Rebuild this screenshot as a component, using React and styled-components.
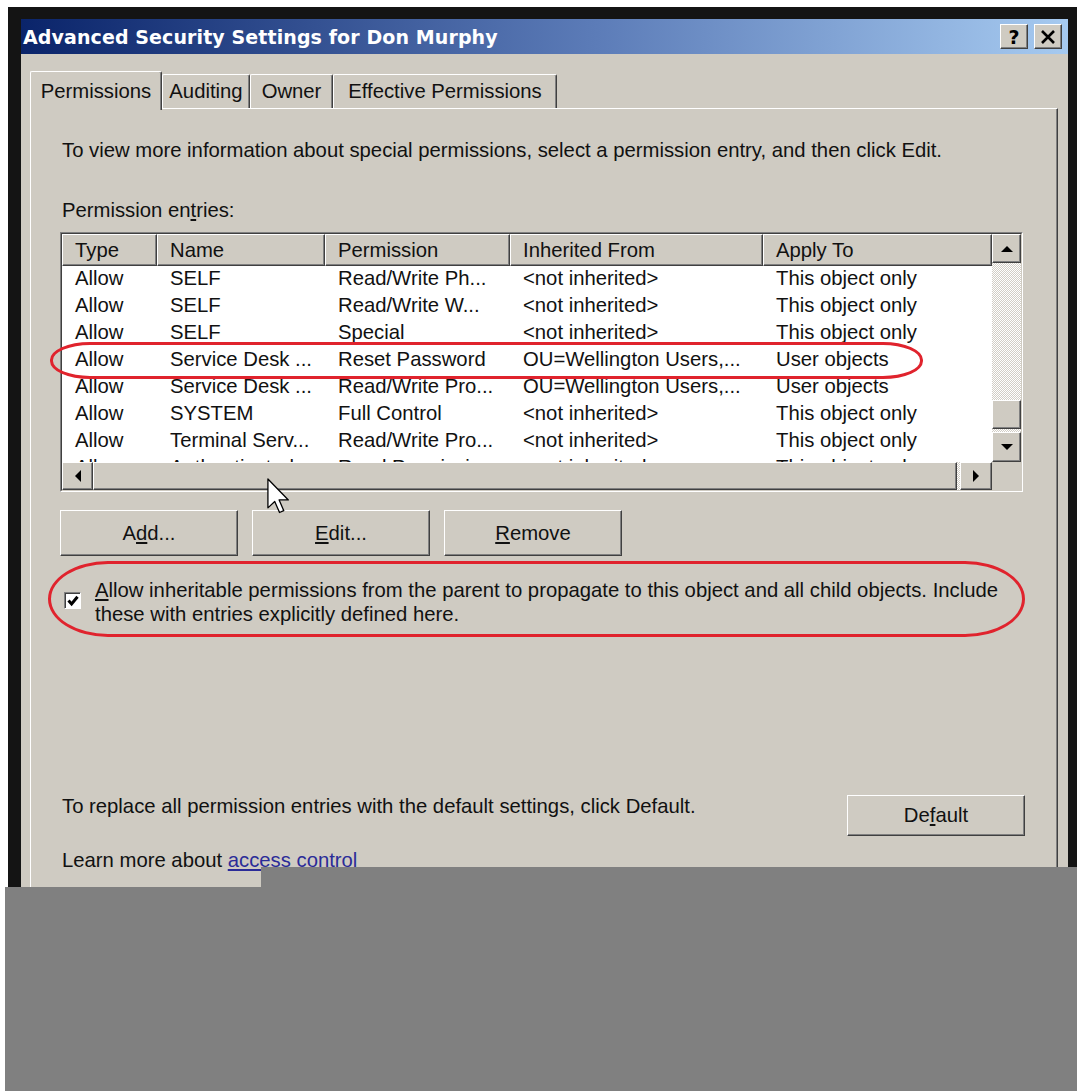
import React from 'react';
import styled, { createGlobalStyle, css } from 'styled-components';

const FACE = '#cfcbc2';
const SHADOW = '#808080';
const DARK = '#404040';
const TEXT_SIZE = '20.3px';

const GlobalStyle = createGlobalStyle`
  body {
    margin: 0;
    background: #fff;
    font-family: 'Liberation Sans', Arial, sans-serif;
    color: #111;
  }
`;

const raised = css`
  border: 1px solid;
  border-color: #fff ${DARK} ${DARK} #fff;
  box-shadow: inset -1px -1px ${SHADOW};
  background: ${FACE};
  box-sizing: border-box;
`;

const Screen = styled.div`
  position: relative;
  width: 1077px;
  height: 1091px;
  overflow: hidden;
  padding: 7px 0 0 8px;
  box-sizing: border-box;
  display: flex;
`;

const Frame = styled.div`
  flex: 1;
  display: flex;
  flex-direction: column;
  border: solid #141414;
  border-width: 12px 9px 0 13px;
  background: ${FACE};
`;

const TitleBar = styled.div`
  height: 35px;
  flex: 0 0 35px;
  display: flex;
  align-items: center;
  justify-content: space-between;
  padding: 0 6px 0 2px;
  background: linear-gradient(to right, #0a246a 0%, #5c7cb8 55%, #a6caf0 100%);
`;

const Caption = styled.span`
  color: #fff;
  font: bold 19px 'DejaVu Sans', sans-serif;
  letter-spacing: 0.1px;
`;

const CaptionButtons = styled.div`
  display: flex;
  gap: 6px;
`;

const CaptionButton = styled.div`
  ${raised};
  width: 28px;
  height: 25px;
  display: flex;
  align-items: center;
  justify-content: center;
  font: bold 19px 'DejaVu Sans', sans-serif;
  color: #000;
`;

const Body = styled.div`
  flex: 1;
  display: flex;
  flex-direction: column;
  padding: 17px 10px 0 9px;
`;

const TabStrip = styled.div`
  display: flex;
  align-items: flex-end;
  height: 39px;
  margin-bottom: -2px;
  position: relative;
  z-index: 1;
`;

const Tab = styled.div`
  width: ${(p) => p.$width}px;
  height: ${(p) => (p.$active ? 39 : 34)}px;
  margin-bottom: ${(p) => (p.$active ? 0 : 2)}px;
  box-sizing: border-box;
  display: flex;
  align-items: center;
  justify-content: center;
  background: ${FACE};
  border-top: 1px solid #fff;
  border-left: 1px solid #fff;
  border-right: 1px solid ${DARK};
  box-shadow: inset -1px 0 ${SHADOW};
  border-radius: 2px 2px 0 0;
  font-size: ${TEXT_SIZE};
  white-space: nowrap;
`;

const Panel = styled.div`
  flex: 1;
  display: flex;
  flex-direction: column;
  border: 1px solid;
  border-color: #fff ${DARK} ${DARK} #fff;
  box-shadow: inset -1px -1px ${SHADOW};
  padding: 30px 32px 0 29px;
`;

const Note = styled.div`
  margin: ${(p) => p.$top || 0}px 0 0 2px;
  font-size: ${TEXT_SIZE};
  line-height: 22px;
  white-space: nowrap;
`;

const ListFrame = styled.div`
  margin-top: 11px;
  width: 963px;
  height: 260px;
  box-sizing: border-box;
  border: 1px solid;
  border-color: ${SHADOW} #fff #fff ${SHADOW};
`;

const ListGrid = styled.div`
  height: 100%;
  box-sizing: border-box;
  border: 1px solid;
  border-color: ${DARK} ${FACE} ${FACE} ${DARK};
  display: grid;
  grid-template-columns: 1fr 29px;
  grid-template-rows: 1fr 28px;
  background: #fff;
`;

const Table = styled.div`
  overflow: hidden;
  display: flex;
  flex-direction: column;
`;

const HeaderRow = styled.div`
  display: flex;
  flex: 0 0 32px;
`;

const HeaderCell = styled.div`
  ${raised};
  flex: ${(p) => (p.$width ? `0 0 ${p.$width}px` : '1')};
  padding-left: 12px;
  font-size: ${TEXT_SIZE};
  line-height: 30px;
  white-space: nowrap;
`;

const Row = styled.div`
  display: flex;
  flex: 0 0 27px;
`;

const Cell = styled.div`
  flex: ${(p) => (p.$width ? `0 0 ${p.$width}px` : '1')};
  box-sizing: border-box;
  padding: 0 0 2px 13px;
  font-size: ${TEXT_SIZE};
  line-height: 25px;
  white-space: nowrap;
  overflow: hidden;
`;

const ScrollBar = styled.div`
  display: flex;
  flex-direction: ${(p) => (p.$vertical ? 'column' : 'row')};
`;

const ArrowButton = styled.div`
  ${raised};
  flex: 0 0 ${(p) => p.$size}px;
  display: flex;
  align-items: center;
  justify-content: center;
`;

const Thumb = styled.div`
  ${raised};
  flex: ${(p) => (p.$size ? `0 0 ${p.$size}px` : '1')};
`;

const Track = styled.div`
  flex: ${(p) => (p.$size ? `0 0 ${p.$size}px` : '1')};
  background: repeating-conic-gradient(#fff 0 25%, #d2cec6 0 50%) 0 0 / 2px 2px;
`;

const Corner = styled.div`
  background: ${FACE};
`;

const ButtonRow = styled.div`
  display: flex;
  gap: 14px;
  margin-top: 18px;
`;

const PushButton = styled.div`
  ${raised};
  width: 178px;
  height: ${(p) => p.$height || 46}px;
  margin-left: ${(p) => (p.$push ? 'auto' : 0)};
  display: flex;
  align-items: center;
  justify-content: center;
  font-size: ${TEXT_SIZE};
`;

const CheckRow = styled.div`
  display: flex;
  margin-top: 22px;
`;

const CheckBox = styled.div`
  width: 17px;
  height: 17px;
  flex: 0 0 17px;
  margin: 14px 14px 0 4px;
  box-sizing: border-box;
  border: 1px solid;
  border-color: ${SHADOW} #fff #fff ${SHADOW};
  box-shadow: inset 1px 1px ${DARK};
  background: #fff;
  display: flex;
  align-items: center;
  justify-content: center;
`;

const CheckLabel = styled.div`
  font-size: ${TEXT_SIZE};
  line-height: 24px;
  white-space: nowrap;
`;

const DefaultRow = styled.div`
  display: flex;
  align-items: flex-start;
  margin-top: 169px;
`;

const Link = styled.span`
  color: #2b2b98;
  text-decoration: underline;
`;

const Highlight = styled.div`
  position: absolute;
  left: ${(p) => p.$left}px;
  top: ${(p) => p.$top}px;
  width: ${(p) => p.$width}px;
  height: ${(p) => p.$height}px;
  box-sizing: border-box;
  border: 3px solid #e0232d;
  border-radius: ${(p) => p.$radius};
  pointer-events: none;
`;

const Pointer = styled.svg`
  position: absolute;
  left: 267px;
  top: 478px;
`;

const Cover = styled.div`
  position: absolute;
  left: ${(p) => p.$left}px;
  top: ${(p) => p.$top}px;
  right: 0;
  bottom: 0;
  background: #808080;
`;

const COLUMNS = [
  { title: 'Type', width: 95 },
  { title: 'Name', width: 168 },
  { title: 'Permission', width: 185 },
  { title: 'Inherited From', width: 253 },
  { title: 'Apply To' },
];

const ENTRIES = [
  ['Allow', 'SELF', 'Read/Write Ph...', '<not inherited>', 'This object only'],
  ['Allow', 'SELF', 'Read/Write W...', '<not inherited>', 'This object only'],
  ['Allow', 'SELF', 'Special', '<not inherited>', 'This object only'],
  ['Allow', 'Service Desk ...', 'Reset Password', 'OU=Wellington Users,...', 'User objects'],
  ['Allow', 'Service Desk ...', 'Read/Write Pro...', 'OU=Wellington Users,...', 'User objects'],
  ['Allow', 'SYSTEM', 'Full Control', '<not inherited>', 'This object only'],
  ['Allow', 'Terminal Serv...', 'Read/Write Pro...', '<not inherited>', 'This object only'],
  ['Allow', 'Authenticated ...', 'Read Permissions', '<not inherited>', 'This object only'],
];

const TABS = [
  { label: 'Permissions', width: 132, active: true },
  { label: 'Auditing', width: 88 },
  { label: 'Owner', width: 83 },
  { label: 'Effective Permissions', width: 224 },
];

const Triangle = ({ dir }) => {
  const points = {
    up: '0,6 6,0 12,6',
    down: '0,0 6,6 12,0',
    left: '6,0 0,6 6,12',
    right: '0,0 6,6 0,12',
  }[dir];
  const vertical = dir === 'up' || dir === 'down';
  return (
    <svg width={vertical ? 12 : 6} height={vertical ? 6 : 12}>
      <polygon points={points} fill="#000" />
    </svg>
  );
};

const App = () => (
  <Screen>
    <GlobalStyle />
    <Frame>
      <TitleBar>
        <Caption>Advanced Security Settings for Don Murphy</Caption>
        <CaptionButtons>
          <CaptionButton>?</CaptionButton>
          <CaptionButton>
            <svg width="16" height="14" viewBox="0 0 16 14">
              <path d="M2 1 L14 13 M14 1 L2 13" stroke="#000" strokeWidth="2.6" />
            </svg>
          </CaptionButton>
        </CaptionButtons>
      </TitleBar>

      <Body>
        <TabStrip>
          {TABS.map((tab) => (
            <Tab key={tab.label} $width={tab.width} $active={tab.active}>
              {tab.label}
            </Tab>
          ))}
        </TabStrip>

        <Panel>
          <Note>
            To view more information about special permissions, select a permission entry, and then
            click Edit.
          </Note>
          <Note $top={38}>
            Permission en<u>t</u>ries:
          </Note>

          <ListFrame>
            <ListGrid>
              <Table>
                <HeaderRow>
                  {COLUMNS.map((col) => (
                    <HeaderCell key={col.title} $width={col.width}>
                      {col.title}
                    </HeaderCell>
                  ))}
                </HeaderRow>
                {ENTRIES.map((entry, i) => (
                  <Row key={i}>
                    {entry.map((value, j) => (
                      <Cell key={j} $width={COLUMNS[j].width}>
                        {value}
                      </Cell>
                    ))}
                  </Row>
                ))}
              </Table>
              <ScrollBar $vertical>
                <ArrowButton $size={29}>
                  <Triangle dir="up" />
                </ArrowButton>
                <Track />
                <Thumb $size={29} />
                <Track $size={3} />
                <ArrowButton $size={30}>
                  <Triangle dir="down" />
                </ArrowButton>
              </ScrollBar>
              <ScrollBar>
                <ArrowButton $size={31}>
                  <Triangle dir="left" />
                </ArrowButton>
                <Thumb />
                <Track $size={3} />
                <ArrowButton $size={32}>
                  <Triangle dir="right" />
                </ArrowButton>
              </ScrollBar>
              <Corner />
            </ListGrid>
          </ListFrame>

          <ButtonRow>
            <PushButton>
              A<u>d</u>d...
            </PushButton>
            <PushButton>
              <u>E</u>dit...
            </PushButton>
            <PushButton>
              <u>R</u>emove
            </PushButton>
          </ButtonRow>

          <CheckRow>
            <CheckBox>
              <svg width="12" height="12" viewBox="0 0 12 12">
                <path d="M1.5 5.5 L4.6 9 L10.5 1.8" stroke="#000" strokeWidth="3" fill="none" />
              </svg>
            </CheckBox>
            <CheckLabel>
              <u>A</u>llow inheritable permissions from the parent to propagate to this object and
              all child objects. Include
              <br />
              these with entries explicitly defined here.
            </CheckLabel>
          </CheckRow>

          <DefaultRow>
            <Note>To replace all permission entries with the default settings, click Default.</Note>
            <PushButton $push $height={41}>
              De<u>f</u>ault
            </PushButton>
          </DefaultRow>
          <Note $top={13}>
            Learn more about <Link>access control</Link>
          </Note>
        </Panel>
      </Body>
    </Frame>

    <Highlight $left={50} $top={342} $width={873} $height={37} $radius="40px / 18px" />
    <Highlight $left={48} $top={561} $width={977} $height={76} $radius="60px / 38px" />

    <Pointer width="23" height="36" viewBox="0 0 12.5 19.5">
      <path
        d="M0.5 0.5 V16.2 L4.2 12.7 L6.8 18.7 L9.1 17.7 L6.6 11.9 H11.6 Z"
        fill="#fff"
        stroke="#000"
        strokeWidth="0.7"
        strokeLinejoin="round"
      />
    </Pointer>

    <Cover $left={261} $top={867} />
    <Cover $left={5} $top={887} />
  </Screen>
);

export default App;
